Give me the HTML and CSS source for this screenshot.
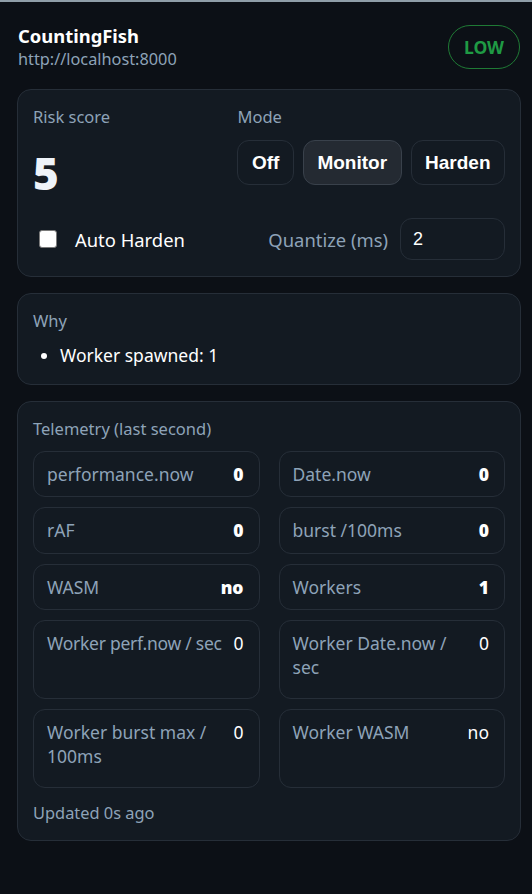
FILE: index.html
```html
<!DOCTYPE html>
<html>
<head>
<meta charset="utf-8">
<link rel="stylesheet" href="styles.css">
</head>
<body>
<div class="frame-edge"></div>
<main class="app">
  <header class="header">
    <div class="site">
      <div class="site-name">CountingFish</div>
      <div class="site-url">http://localhost:8000</div>
    </div>
    <div class="badge">LOW</div>
  </header>

  <section class="card controls">
    <div class="top-row">
      <div class="risk">
        <div class="muted label">Risk score</div>
        <div class="score">5</div>
      </div>
      <div class="mode">
        <div class="muted label">Mode</div>
        <div class="mode-buttons">
          <button class="mode-btn">Off</button>
          <button class="mode-btn active">Monitor</button>
          <button class="mode-btn">Harden</button>
        </div>
      </div>
    </div>
    <div class="bottom-row">
      <label class="auto"><input type="checkbox" class="check"><span>Auto Harden</span></label>
      <div class="quant">
        <span class="muted quant-label">Quantize (ms)</span>
        <div class="quant-input">2</div>
      </div>
    </div>
  </section>

  <section class="card why">
    <div class="muted label">Why</div>
    <ul class="reasons">
      <li>Worker spawned: 1</li>
    </ul>
  </section>

  <section class="card telemetry">
    <div class="muted label">Telemetry (last second)</div>
    <div class="grid">
      <div class="cell"><span class="k">performance.now</span><span class="v strong">0</span></div>
      <div class="cell"><span class="k">Date.now</span><span class="v strong">0</span></div>
      <div class="cell"><span class="k">rAF</span><span class="v strong">0</span></div>
      <div class="cell"><span class="k">burst /100ms</span><span class="v strong">0</span></div>
      <div class="cell"><span class="k">WASM</span><span class="v strong">no</span></div>
      <div class="cell"><span class="k">Workers</span><span class="v strong">1</span></div>
      <div class="cell tall tight"><span class="k">Worker perf.now / sec</span><span class="v">0</span></div>
      <div class="cell tall"><span class="k">Worker Date.now / sec</span><span class="v">0</span></div>
      <div class="cell tall"><span class="k">Worker burst max / 100ms</span><span class="v">0</span></div>
      <div class="cell tall"><span class="k">Worker WASM</span><span class="v">no</span></div>
    </div>
    <div class="muted updated">Updated 0s ago</div>
  </section>
</main>
</body>
</html>
```
FILE: styles.css
```css
* { box-sizing: border-box; }
html, body { margin: 0; padding: 0; }
body {
  background: #0c1016;
  color: #e6edf3;
  font-family: "Noto Sans", "Open Sans", sans-serif;
  width: 532px;
  height: 894px;
  overflow: hidden;
}
.frame-edge {
  height: 2px;
  background: #8f9ea8;
}
.app {
  width: 504px;
  margin-left: 17px;
  padding-top: 22px;
  display: flex;
  flex-direction: column;
  gap: 16px;
}
.header {
  display: flex;
  justify-content: space-between;
  align-items: center;
  margin-bottom: 3px;
}
.site { padding-left: 1px; }
.site-name {
  font-size: 18.4px;
  font-weight: 700;
  line-height: 24px;
  color: #ffffff;
}
.site-url {
  font-size: 16.3px;
  line-height: 22px;
  color: #8ea3b8;
}
.badge {
  height: 44px;
  padding: 0 15px;
  margin-right: 1px;
  border: 1px solid #1f7a35;
  border-radius: 22px;
  color: #1f9a44;
  font-weight: 700;
  font-size: 17.5px;
  display: flex;
  align-items: center;
}
.card {
  background: #131a22;
  border: 1px solid #262e38;
  border-radius: 14px;
  padding: 15px 15px;
}
.controls { padding-bottom: 15.5px; }
.muted { color: #8ea3b8; }
.label {
  font-size: 16.5px;
  line-height: 24px;
}
.top-row {
  display: grid;
  grid-template-columns: 1fr auto;
}
.score {
  font-size: 44px;
  font-weight: 900;
  line-height: 44px;
  margin-top: 22px;
  color: #eef3f9;
}
.mode-buttons {
  display: flex;
  gap: 9px;
  margin-top: 11px;
}
.mode-btn {
  height: 45px;
  padding: 0 13.5px;
  background: transparent;
  border: 1px solid #262e38;
  border-radius: 12px;
  color: #ffffff;
  font-family: "Liberation Sans", Arial, sans-serif;
  font-weight: 700;
  font-size: 19px;
}
.mode-btn.active {
  background: #242a32;
  border-color: #39414b;
}
.bottom-row {
  display: flex;
  justify-content: space-between;
  align-items: center;
  margin-top: 23px;
}
.auto {
  display: flex;
  align-items: center;
  gap: 18px;
  padding-left: 6px;
  font-size: 18.4px;
  color: #ffffff;
}
.check {
  appearance: none;
  -webkit-appearance: none;
  width: 18px;
  height: 18px;
  margin: 0;
  background: #ffffff;
  border: 1px solid #7a7a7a;
  border-radius: 3px;
}
.quant {
  display: flex;
  align-items: center;
  gap: 12px;
}
.quant-label { font-size: 18.4px; }
.quant-input {
  width: 105px;
  height: 42px;
  border: 1px solid #262e38;
  border-radius: 12px;
  padding: 0 12px;
  display: flex;
  align-items: center;
  font-family: "Liberation Sans", Arial, sans-serif;
  font-size: 18px;
  color: #ffffff;
}
.why { padding-bottom: 16px; }
.reasons {
  margin: 9px 0 0;
  padding-left: 27px;
  font-size: 17.5px;
  line-height: 26px;
  color: #ffffff;
}
.grid {
  display: grid;
  grid-template-columns: 1fr 1fr;
  column-gap: 19px;
  row-gap: 10px;
  margin-top: 10px;
}
.cell {
  border: 1px solid #262e38;
  border-radius: 12px;
  padding: 10px 15px 10px 13px;
  display: flex;
  justify-content: space-between;
  align-items: flex-start;
  gap: 10px;
  min-height: 46.5px;
}
.cell.tall { padding-bottom: 19px; }
.cell.tight { gap: 4px; }
.cell.tight .k { white-space: nowrap; letter-spacing: -0.25px; }
.k {
  font-size: 17.5px;
  line-height: 24px;
  color: #8ea3b8;
}
.v {
  font-size: 17.5px;
  line-height: 24px;
  color: #ffffff;
  white-space: nowrap;
}
.v.strong { font-weight: 900; }
.updated {
  font-size: 16.4px;
  line-height: 24px;
  margin-top: 13px;
}
```
